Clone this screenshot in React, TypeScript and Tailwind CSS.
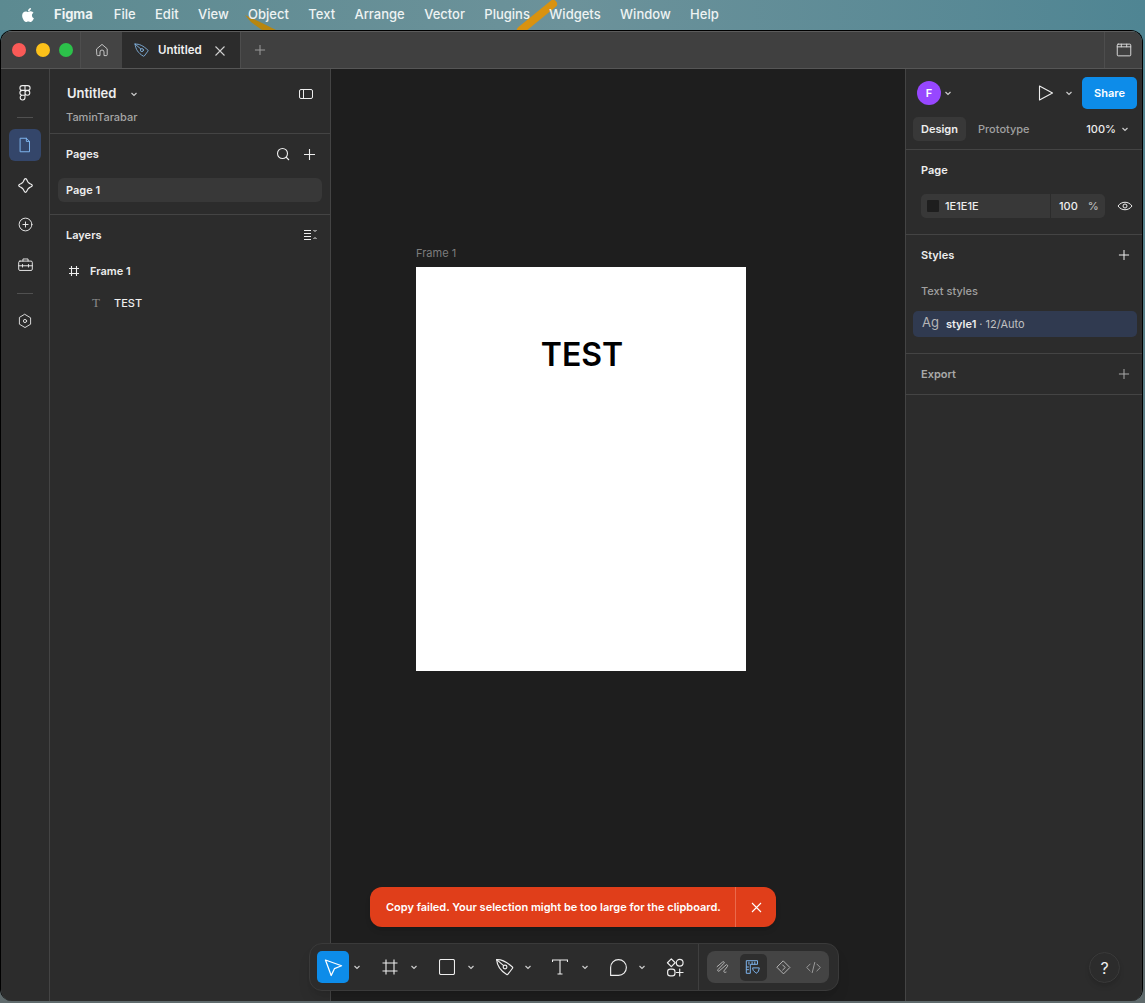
import { FaApple } from 'react-icons/fa';

const menuItems = ['File', 'Edit', 'View', 'Object', 'Text', 'Arrange', 'Vector', 'Plugins', 'Widgets', 'Window', 'Help'];

function Chevron({ className = '' }: { className?: string }) {
  return (
    <svg width="8" height="8" viewBox="0 0 8 8" fill="none" stroke="currentColor" strokeWidth="1.2" className={className}>
      <path d="M1.5 3 4 5.5 6.5 3" />
    </svg>
  );
}

function Plus({ size = 13 }: { size?: number }) {
  return (
    <svg width={size} height={size} viewBox="0 0 13 13" stroke="currentColor" strokeWidth="1.1">
      <path d="M6.5 1v11M1 6.500h11" />
    </svg>
  );
}

function Ico({ size = 20, sw = 1.1, children, className = '' }: { size?: number; sw?: number; children: React.ReactNode; className?: string }) {
  return (
    <svg width={size} height={size} viewBox="0 0 20 20" fill="none" stroke="currentColor" strokeWidth={sw} strokeLinejoin="round" strokeLinecap="round" className={className}>
      {children}
    </svg>
  );
}

function PenIcon({ size = 20, sw = 1.1, className = '' }: { size?: number; sw?: number; className?: string }) {
  return (
    <Ico size={size} sw={sw} className={className}>
      <path d="M2.500 2.500C7.500 2 12 4.500 17.500 9.500c.4.4.4.800.1 1.200l-4.300 5.700c-.3.400-.7.500-1.200.2C6 13 3 8.500 2.500 2.500z" />
      <circle cx="10.500" cy="9.500" r="1.800" />
      <path d="M2.500 2.500 9.200 8.200" />
    </Ico>
  );
}

function Divider() {
  return <div className="h-px bg-[#444444] shrink-0" />;
}

function MenuBar() {
  return (
    <div className="relative h-[30px] shrink-0 flex items-center pl-[20px] text-[13px] text-[#eef3f3] bg-gradient-to-r from-[#5c8a91] via-[#6c929a] to-[#4f8593]">
      <svg width="1145" height="30" viewBox="0 0 1145 30" fill="none" className="absolute left-0 top-0">
        <path d="M245 15 262 23 276 30H262L251 22z" fill="#b8860f" />
        <path d="M521 30 553 4" stroke="#d9920f" strokeWidth="8" strokeLinecap="round" />
      </svg>
      <FaApple size={16} className="relative text-white mr-[18px]" />
      <span className="relative font-bold mr-[21px]">Figma</span>
      <div className="relative flex gap-[19.4px] font-medium">
        {menuItems.map((m) => (
          <span key={m}>{m}</span>
        ))}
      </div>
    </div>
  );
}

function TabBar() {
  return (
    <div className="h-[37px] shrink-0 flex items-stretch bg-[#404040] border-b border-[#565656] text-white">
      <div className="w-[80px] flex items-center gap-[9.5px] pl-[11px] border-r border-[#4d4d4d]">
        <span className="w-[14px] h-[14px] rounded-full bg-[#fa5a57]" />
        <span className="w-[14px] h-[14px] rounded-full bg-[#fcc11a]" />
        <span className="w-[14px] h-[14px] rounded-full bg-[#2cc14a]" />
      </div>
      <div className="w-[41px] flex items-center justify-center bg-[#444444] text-[#d5d5d5]">
        <Ico size={16}>
          <path d="M3.500 8.500 10 3l6.500 5.500V16a1 1 0 0 1-1 1h-3v-4.500a2.500 2.500 0 0 0-5 0V17h-3a1 1 0 0 1-1-1z" />
        </Ico>
      </div>
      <div className="w-[119px] flex items-center pl-[11px] pt-[1px] bg-[#2c2c2c] text-[11.5px] font-semibold text-[#f0f0f0] border-r border-[#4d4d4d]">
        <PenIcon size={17} className="text-[#7fb0dc]" />
        <span className="ml-[8px]">Untitled</span>
        <svg width="12" height="12" viewBox="0 0 12 12" stroke="#d0d0d0" strokeWidth="1.100" className="ml-[12px]">
          <path d="M1.500 1.500l9 9M10.500 1.500l-9 9" />
        </svg>
      </div>
      <div className="w-[38px] flex items-center justify-center text-[#9a9a9a]">
        <Plus size={12} />
      </div>
      <div className="flex-1" />
      <div className="w-[38px] flex items-center justify-center border-l border-[#4d4d4d] text-[#d8d8d8]">
        <Ico size={18}>
          <rect x="2.500" y="3.500" width="15" height="13" rx="1" />
          <path d="M2.500 6.500h15M7 3.500v3M13 3.500v3" />
        </Ico>
      </div>
    </div>
  );
}

function Rail() {
  return (
    <div className="w-[49px] shrink-0 bg-[#2c2c2c] border-r border-[#444444] flex flex-col items-center pt-[16px] text-[#eeeeee]">
      <svg width="12" height="16" viewBox="0 0 12 16" fill="none" stroke="currentColor" strokeWidth="1.100">
        <path d="M6 .6H3.300a2.400 2.400 0 0 0 0 4.800H6zM6 5.400H3.300a2.400 2.400 0 0 0 0 4.800H6zM6 .6h2.700a2.400 2.400 0 0 1 0 4.800H6zM6 7.800a2.400 2.400 0 1 0 4.800 0 2.400 2.400 0 0 0-4.800 0zM6 10.200H3.300A2.400 2.400 0 1 0 6 12.600z" />
      </svg>
      <div className="w-[16px] h-px bg-[#505050] mt-[16px] mb-[11px]" />
      <div className="w-[32px] h-[32px] rounded-[6px] bg-[#34466a] flex items-center justify-center text-[#7db4ee]">
        <Ico size={18}>
          <path d="M5 2.500h6.500L15 6v11.500H5zM11.500 2.500V6H15" />
        </Ico>
      </div>
      <div className="mt-[14px]">
        <Ico size={21}>
          <path d="M10 3.500c1 0 1.300 1 1.800 2.300.4 1 1.200 1.900 2.400 2.400 1.300.5 2.300.8 2.300 1.800s-1 1.300-2.300 1.800c-1.200.5-2 1.400-2.400 2.400-.5 1.300-.8 2.300-1.800 2.300s-1.300-1-1.800-2.300c-.4-1-1.200-1.900-2.400-2.400-1.300-.5-2.300-.8-2.300-1.800s1-1.300 2.300-1.800c1.200-.5 2-1.400 2.400-2.400.5-1.300.8-2.300 1.800-2.300z" />
        </Ico>
      </div>
      <div className="mt-[20px]">
        <Ico size={17}>
          <circle cx="10" cy="10" r="7.500" />
          <path d="M10 7v6M7 10h6" />
        </Ico>
      </div>
      <div className="mt-[23px]">
        <Ico size={17}>
          <rect x="2" y="6" width="16" height="11" rx="1.500" />
          <path d="M7 6V3.500h6V6M2 11.500h16M6.500 10v3M13.500 10v3" />
        </Ico>
      </div>
      <div className="w-[16px] h-px bg-[#505050] mt-[20px] mb-[19px]" />
      <Ico size={16}>
        <path d="M10 1.800 17 6v8l-7 4.200L3 14V6z" />
        <circle cx="10" cy="10" r="2" />
      </Ico>
    </div>
  );
}

function LeftPanel() {
  return (
    <div className="w-[281px] shrink-0 bg-[#2c2c2c] border-r border-[#444444] flex flex-col text-[#eeeeee]">
      <div className="h-[64px] shrink-0 pl-[17px] pr-[16px] pt-[17px]">
        <div className="flex items-center h-[16px]">
          <span className="text-[13px] font-semibold">Untitled</span>
          <Chevron className="ml-[14px] text-[#cccccc]" />
          <svg width="16" height="12" viewBox="0 0 16 12" fill="none" stroke="currentColor" strokeWidth="1" className="ml-auto">
            <rect x="1.500" y="1.500" width="13" height="9" rx="1.500" />
            <path d="M5.500 1.500v9" />
          </svg>
        </div>
        <div className="text-[11px] text-[#a6a6a6] -ml-[1px] mt-[7px] font-medium">TaminTarabar</div>
      </div>
      <Divider />
      <div className="h-[80px] shrink-0">
        <div className="h-[40px] flex items-center pl-[16px] pr-[14px]">
          <span className="text-[11px] font-semibold">Pages</span>
          <svg width="14" height="14" viewBox="0 0 14 14" fill="none" stroke="currentColor" strokeWidth="1.100" className="ml-auto mr-[13px]">
            <circle cx="6.500" cy="6.500" r="5" />
            <path d="M10 10l3 3" />
          </svg>
          <Plus size={13} />
        </div>
        <div className="mt-[4px] mx-[8px] h-[24px] rounded-[6px] bg-[#383838] flex items-center pl-[8px] text-[11px] font-semibold">Page 1</div>
      </div>
      <Divider />
      <div className="h-[40px] flex items-center pl-[16px] pr-[13px]">
        <span className="text-[11px] font-semibold">Layers</span>
        <svg width="14" height="12" viewBox="0 0 14 12" fill="none" stroke="currentColor" strokeWidth="1" className="ml-auto">
          <path d="M1 1.500h7M1 4.500h7M1 7.500h7M1 10.500h7M10.500 1l1.500 1.500L13.500 1M10.500 10l1.500-1.500 1.500 1.500" />
        </svg>
      </div>
      <div className="h-[32px] flex items-center pl-[18px] text-[11px] font-semibold">
        <svg width="12" height="12" viewBox="0 0 12 12" stroke="currentColor" strokeWidth="1.100" className="mr-[10px]">
          <path d="M3.500 1v10M8.500 1v10M1 3.500h10M1 8.500h10" />
        </svg>
        Frame 1
      </div>
      <div className="h-[32px] flex items-center pl-[42px] text-[11px] font-medium">
        <span className="w-[22px] font-['Liberation_Serif',serif] text-[13px] text-[#8a8a8a]">T</span>
        TEST
      </div>
    </div>
  );
}

function Canvas() {
  return (
    <div className="relative flex-1 bg-[#1e1e1e]">
      <span className="absolute left-[85px] top-[176px] text-[11px] text-[#7d7d7d]">Frame 1</span>
      <div className="absolute left-[85px] top-[198px] w-[330px] h-[404px] bg-white flex justify-center pt-[66px] pl-[2px]">
        <span className="text-[32px] leading-[44px] font-semibold text-black h-fit">TEST</span>
      </div>
      <Toast />
      <Toolbar />
    </div>
  );
}

function Toast() {
  return (
    <div className="absolute left-[39px] top-[818px] w-[406px] h-[40px] rounded-[12px] bg-[#e03e1a] flex items-stretch text-white shadow-md">
      <div className="flex-1 flex items-center pl-[16px] text-[11px] font-semibold whitespace-nowrap">
        Copy failed. Your selection might be too large for the clipboard.
      </div>
      <div className="w-[41px] border-l border-[#ea6a4c] flex items-center justify-center">
        <svg width="11" height="11" viewBox="0 0 11 11" stroke="currentColor" strokeWidth="1.100">
          <path d="M1 1l9 9M10 1l-9 9" />
        </svg>
      </div>
    </div>
  );
}

function ToolSlot({ className, children }: { className: string; children: React.ReactNode }) {
  return <div className={`w-[32px] flex justify-center ${className}`}>{children}</div>;
}

function Toolbar() {
  return (
    <div className="absolute left-[-22px] top-[874px] w-[530px] h-[48px] rounded-[13px] bg-[#2c2c2c] border border-[#3a3a3a] shadow-lg flex items-center pl-[7px] text-[#eeeeee]">
      <div className="w-[32px] h-[32px] rounded-[5px] bg-[#0d8ce9] flex items-center justify-center text-white">
        <Ico size={23}>
          <path d="M3 3.500 17 8.500 10.800 11 8 17z" />
        </Ico>
      </div>
      <Chevron className="ml-[4px] text-[#cccccc]" />
      <ToolSlot className="ml-[13px]">
        <svg width="16" height="16" viewBox="0 0 16 16" stroke="currentColor" strokeWidth="1.100">
          <path d="M4 .5v15M12 .5v15M.5 4h15M.5 12h15" />
        </svg>
      </ToolSlot>
      <Chevron className="ml-[4px] text-[#cccccc]" />
      <ToolSlot className="ml-[13px]">
        <svg width="16" height="16" viewBox="0 0 16 16" fill="none" stroke="currentColor" strokeWidth="1.100">
          <rect x="0.500" y="0.500" width="15" height="15" rx="1.500" />
        </svg>
      </ToolSlot>
      <Chevron className="ml-[4px] text-[#cccccc]" />
      <ToolSlot className="ml-[13px]">
        <PenIcon size={21} />
      </ToolSlot>
      <Chevron className="ml-[4px] text-[#cccccc]" />
      <ToolSlot className="ml-[12px]">
        <svg width="16" height="16" viewBox="0 0 16 16" fill="none" stroke="currentColor" strokeWidth="1.100">
          <path d="M.5 3V1h15v2M8 1v14M5.500 15h5" />
        </svg>
      </ToolSlot>
      <Chevron className="ml-[5px] text-[#cccccc]" />
      <ToolSlot className="ml-[13px]">
        <Ico size={21}>
          <path d="M2.500 17.500V10a7.500 7.500 0 1 1 7.500 7.500z" />
        </Ico>
      </ToolSlot>
      <Chevron className="ml-[4px] text-[#cccccc]" />
      <ToolSlot className="ml-[13px]">
        <Ico size={21}>
          <path d="M6 1.800 9.700 5.500 6 9.200 2.300 5.500z" />
          <circle cx="14" cy="5.500" r="3.200" />
          <rect x="2.500" y="11.500" width="7" height="6.500" rx="2.500" />
          <path d="M14 11.500v6.500M10.800 14.800h6.400" />
        </Ico>
      </ToolSlot>
      <div className="w-px h-[46px] bg-[#3f3f3f] ml-[7px]" />
      <div className="ml-[8px] w-[122px] h-[32px] rounded-[8px] bg-[#444444] flex items-center justify-between px-[1px] text-[#bdbdbd]">
        <div className="w-[30px] flex justify-center">
          <Ico size={17}>
            <path d="M2.500 9 9 3.500c1.500-1 2.500.5 1.500 1.500l-7 7.500c-1 1.500.5 2.500 1.500 1.500L13 7c1-1 2.500.5 1.500 2l-4 5c-.5 1 .5 2.500 2.500 1.500" />
          </Ico>
        </div>
        <div className="w-[30px] flex justify-center">
          <div className="w-[27px] h-[27px] rounded-[5px] bg-[#2e2e2e] flex items-center justify-center text-[#7db4ee]">
            <Ico size={18}>
              <path d="M3 3h12v4H7v10H3zM5.500 4.500V7M9 4.500V7M12 4.500V7M3 10h2M3 13h2" />
              <path d="M10 11h7l-1 4-2.500 2-3-3z" />
            </Ico>
          </div>
        </div>
        <div className="w-[30px] flex justify-center">
          <Ico size={17}>
            <path d="M10 2.500 17.500 10 10 17.500 2.500 10z" />
            <path d="M9 7l3 3-3 3" />
          </Ico>
        </div>
        <div className="w-[30px] flex justify-center text-[#a0a0a0]">
          <Ico size={17}>
            <path d="M6 6l-4 4 4 4M14 6l4 4-4 4M11.500 4l-3 12" />
          </Ico>
        </div>
      </div>
    </div>
  );
}

function RightPanel() {
  return (
    <div className="relative flex-1 min-w-0 bg-[#2c2c2c] border-l border-[#444444] flex flex-col text-[#eeeeee]">
      <div className="h-[80px] shrink-0 pl-[7px] pr-[5px] pt-[8px]">
        <div className="flex items-center h-[32px] pl-[4px]">
          <div className="w-[24px] h-[24px] rounded-full bg-[#9747ff] flex items-center justify-center text-[11px] font-semibold text-white">F</div>
          <Chevron className="ml-[3px] text-[#cccccc]" />
          <svg width="16" height="18" viewBox="0 0 16 18" fill="none" stroke="currentColor" strokeWidth="1.100" strokeLinejoin="round" className="ml-auto">
            <path d="M1.500 2v14l13-7z" />
          </svg>
          <Chevron className="ml-[11px] text-[#cccccc]" />
          <div className="ml-[9px] w-[55px] h-[32px] rounded-[5px] bg-[#0d8ce9] flex items-center justify-center text-[11px] font-semibold text-white">Share</div>
        </div>
        <div className="flex items-center h-[24px] mt-[8px] text-[11px] font-semibold">
          <div className="w-[53px] h-[24px] rounded-[5px] bg-[#383838] flex items-center justify-center">Design</div>
          <span className="ml-[12px] text-[#a0a0a0] font-medium">Prototype</span>
          <span className="ml-auto font-medium">100%</span>
          <Chevron className="ml-[5px] mr-[8px] text-[#cccccc]" />
        </div>
      </div>
      <Divider />
      <div className="h-[84px] shrink-0 pl-[15px] pt-[13px]">
        <div className="text-[11px] font-semibold leading-[14px]">Page</div>
        <div className="flex items-center mt-[17px]">
          <div className="w-[184px] h-[24px] rounded-[5px] bg-[#383838] flex items-center text-[11px] font-medium">
            <div className="w-[12px] h-[12px] rounded-[1px] bg-[#1e1e1e] ml-[6px]" />
            <span className="ml-[6px] w-[105px]">1E1E1E</span>
            <div className="w-px h-[24px] bg-[#2c2c2c]" />
            <span className="ml-[8px]">100</span>
            <span className="ml-[10px] text-[#bdbdbd]">%</span>
          </div>
          <svg width="16" height="12" viewBox="0 0 16 12" fill="none" stroke="currentColor" strokeWidth="1" className="ml-[12px]">
            <path d="M1 6c3.500-5 10.500-5 14 0-3.500 5-10.500 5-14 0z" />
            <circle cx="8" cy="6" r="2" />
          </svg>
        </div>
      </div>
      <Divider />
      <div className="h-[118px] shrink-0 pt-[13px]">
        <div className="flex items-center justify-between pl-[15px] pr-[12px] h-[14px] text-[11px] font-semibold">
          Styles
          <Plus size={12} />
        </div>
        <div className="mt-[22px] pl-[15px] text-[11px] font-medium text-[#a0a0a0] leading-[14px]">Text styles</div>
        <div className="mt-[13px] ml-[7px] w-[224px] h-[26px] rounded-[5px] bg-[#303a50] flex items-center pl-[9px] text-[11px]">
          <span className="text-[13px] text-[#b5b5b5] mr-[7px] -mt-[2px]">Ag</span>
          <span className="font-semibold">style1</span>
          <span className="text-[#c0c0c0] ml-[3px]">· 12/Auto</span>
        </div>
      </div>
      <Divider />
      <div className="h-[40px] shrink-0 flex items-center justify-between pl-[15px] pr-[12px] text-[11px] font-semibold text-[#a9a9a9]">
        Export
        <Plus size={12} />
      </div>
      <Divider />
      <div className="absolute right-[22px] bottom-[18px] w-[31px] h-[31px] rounded-full bg-[#2c2c2c] border border-[#3a3a3a] shadow-md flex items-center justify-center text-[16px] text-[#eeeeee]">?</div>
    </div>
  );
}

export default function App() {
  return (
    <div className="w-[1145px] h-[1003px] flex flex-col overflow-hidden bg-gradient-to-b from-[#4f8593] to-[#5f6a6c] font-['Inter',sans-serif]">
      <MenuBar />
      <div className="flex-1 min-h-0 mr-[2px] mb-[2px] rounded-[12px] overflow-hidden border border-black border-b-0 flex flex-col">
        <div className="h-px shrink-0 bg-[#5c5c5c]" />
        <TabBar />
        <div className="flex-1 min-h-0 flex">
          <Rail />
          <LeftPanel />
          <Canvas />
          <div className="w-[237px] shrink-0 flex">
            <RightPanel />
          </div>
        </div>
      </div>
    </div>
  );
}
